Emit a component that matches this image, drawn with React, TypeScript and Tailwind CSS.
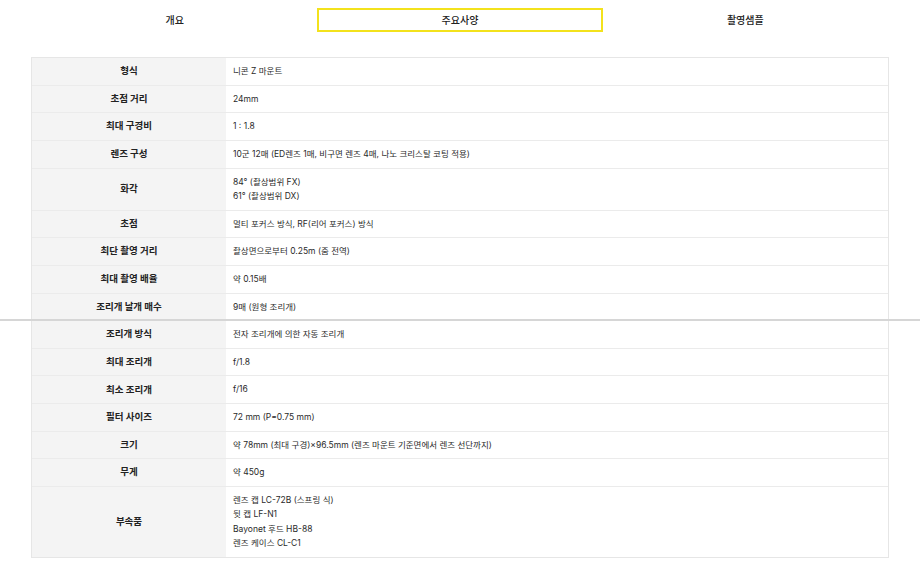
const font = { fontFamily: 'Inter, "Noto Sans CJK KR", "Noto Sans", sans-serif' };

type Spec = { label: string; values: string[] };

const specs: Spec[] = [
  { label: "형식", values: ["니콘 Z 마운트"] },
  { label: "초점 거리", values: ["24mm"] },
  { label: "최대 구경비", values: ["1 : 1.8"] },
  { label: "렌즈 구성", values: ["10군 12매 (ED렌즈 1매, 비구면 렌즈 4매, 나노 크리스탈 코팅 적용)"] },
  { label: "화각", values: ["84° (촬상범위 FX)", "61° (촬상범위 DX)"] },
  { label: "초점", values: ["멀티 포커스 방식, RF(리어 포커스) 방식"] },
  { label: "최단 촬영 거리", values: ["촬상면으로부터 0.25m (줌 전역)"] },
  { label: "최대 촬영 배율", values: ["약 0.15배"] },
  { label: "조리개 날개 매수", values: ["9매 (원형 조리개)"] },
  { label: "조리개 방식", values: ["전자 조리개에 의한 자동 조리개"] },
  { label: "최대 조리개", values: ["f/1.8"] },
  { label: "최소 조리개", values: ["f/16"] },
  { label: "필터 사이즈", values: ["72 mm (P=0.75 mm)"] },
  { label: "크기", values: ["약 78mm (최대 구경)×96.5mm (렌즈 마운트 기준면에서 렌즈 선단까지)"] },
  { label: "무게", values: ["약 450g"] },
  {
    label: "부속품",
    values: ["렌즈 캡 LC-72B (스프링 식)", "뒷 캡 LF-N1", "Bayonet 후드 HB-88", "렌즈 케이스 CL-C1"],
  },
];

const tabs = ["개요", "주요사양", "촬영샘플"];

export default function App() {
  return (
    <div className="relative w-[920px] h-[576px] overflow-hidden bg-white text-[#222]" style={font}>
      {/* Tabs */}
      <div className="grid grid-cols-3 px-[32px] pt-[8px]">
        {tabs.map((t, i) => (
          <div
            key={t}
            className={
              i === 1
                ? "h-[24px] flex items-center justify-center border-2 border-[#f3e21c] text-[10px] font-medium"
                : "h-[24px] flex items-center justify-center text-[10px] font-medium"
            }
          >
            {t}
          </div>
        ))}
      </div>

      {/* Spec table */}
      <div className="mx-[31px] mt-[25px] border border-[#e6e6e6]">
        {specs.map((s) => (
          <div key={s.label} className="flex border-b border-[#ebebeb] last:border-b-0">
            <div className="w-[194px] shrink-0 bg-[#f4f4f4] flex items-center justify-center text-[9.5px] font-bold">
              {s.label}
            </div>
            <div className="flex-1 px-[7px] py-[6.07px] text-[8.5px] leading-[14.5px] text-[#2a2a2a]">
              {s.values.map((v) => (
                <div key={v}>{v}</div>
              ))}
            </div>
          </div>
        ))}
      </div>

      {/* page seam line */}
      <div className="absolute left-0 right-0 top-[319px] h-[2px] bg-[#d6d6d6]" />
    </div>
  );
}
